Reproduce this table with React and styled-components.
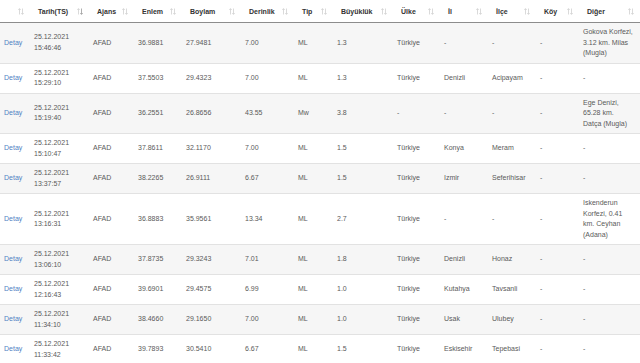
import styled, { createGlobalStyle } from 'styled-components';

const GlobalStyle = createGlobalStyle`
  body {
    margin: 0;
    background: #fff;
    font-family: 'Liberation Sans', Arial, sans-serif;
  }
`;

const columns = [
  { label: '', width: 30 },
  { label: 'Tarih(TS)', width: 59, active: true },
  { label: 'Ajans', width: 45 },
  { label: 'Enlem', width: 48 },
  { label: 'Boylam', width: 59 },
  { label: 'Derinlik', width: 53 },
  { label: 'Tip', width: 39 },
  { label: 'Büyüklük', width: 60 },
  { label: 'Ülke', width: 47 },
  { label: 'İl', width: 48 },
  { label: 'İlçe', width: 48 },
  { label: 'Köy', width: 43 },
  { label: 'Diğer', width: 61 },
];

const rows = [
  ['15:46:46', '36.9881', '27.9481', '7.00', 'ML', '1.3', 'Türkiye', '-', '-', '-', 'Gokova Korfezi, 3.12 km. Milas (Mugla)'],
  ['15:29:10', '37.5503', '29.4323', '7.00', 'ML', '1.3', 'Türkiye', 'Denizli', 'Acipayam', '-', '-'],
  ['15:19:40', '36.2551', '26.8656', '43.55', 'Mw', '3.8', '-', '-', '-', '-', 'Ege Denizi, 65.28 km. Datça (Mugla)'],
  ['15:10:47', '37.8611', '32.1170', '7.00', 'ML', '1.5', 'Türkiye', 'Konya', 'Meram', '-', '-'],
  ['13:37:57', '38.2265', '26.9111', '6.67', 'ML', '1.5', 'Türkiye', 'Izmir', 'Seferihisar', '-', '-'],
  ['13:16:31', '36.8883', '35.9561', '13.34', 'ML', '2.7', 'Türkiye', '-', '-', '-', 'Iskenderun Korfezi, 0.41 km. Ceyhan (Adana)'],
  ['13:06:10', '37.8735', '29.3243', '7.01', 'ML', '1.8', 'Türkiye', 'Denizli', 'Honaz', '-', '-'],
  ['12:16:43', '39.6901', '29.4575', '6.99', 'ML', '1.0', 'Türkiye', 'Kutahya', 'Tavsanli', '-', '-'],
  ['11:34:10', '38.4660', '29.1650', '7.00', 'ML', '1.0', 'Türkiye', 'Usak', 'Ulubey', '-', '-'],
  ['11:33:42', '39.7893', '30.5410', '6.67', 'ML', '1.5', 'Türkiye', 'Eskisehir', 'Tepebasi', '-', '-'],
];

function SortIcon({ active }) {
  return (
    <SortSvg viewBox="0 0 6 7" width="6" height="7">
      <path d="M1.5 6.5V0.8M0.3 2L1.5 0.6L2.7 2" stroke="#d0d0d0" strokeWidth="0.8" fill="none" />
      <path
        d="M4.5 0.5V6.2M3.3 5L4.5 6.4L5.7 5"
        stroke={active ? '#9a9a9a' : '#d0d0d0'}
        strokeWidth="0.8"
        fill="none"
      />
    </SortSvg>
  );
}

function App() {
  return (
    <>
      <GlobalStyle />
      <Table>
        <colgroup>
          {columns.map((col, i) => (
            <col key={i} style={{ width: col.width }} />
          ))}
        </colgroup>
        <thead>
          <tr>
            {columns.map((col, i) => (
              <HeadCell key={i}>
                <HeadInner>
                  <span>{col.label}</span>
                  <SortIcon active={col.active} />
                </HeadInner>
              </HeadCell>
            ))}
          </tr>
        </thead>
        <tbody>
          {rows.map(([time, ...rest], i) => (
            <Row key={i} $striped={i % 2 === 0}>
              <Cell>
                <DetailLink href="#">Detay</DetailLink>
              </Cell>
              <Cell>
                25.12.2021 {time}
              </Cell>
              <Cell>AFAD</Cell>
              {rest.map((value, j) => (
                <Cell key={j} $wrap={j === rest.length - 1}>
                  {value}
                </Cell>
              ))}
            </Row>
          ))}
        </tbody>
      </Table>
    </>
  );
}

const Table = styled.table`
  width: 640px;
  table-layout: fixed;
  border-collapse: collapse;
  font-size: 7px;
  color: #5a5a5a;
`;

const HeadCell = styled.th`
  height: 22px;
  padding: 0 6px 0 8px;
  border-bottom: 1px solid #8c8c8c;
  font-weight: bold;
  color: #333;
  text-align: left;
  vertical-align: middle;
`;

const HeadInner = styled.div`
  display: flex;
  align-items: center;
  justify-content: space-between;
  white-space: nowrap;
`;

const SortSvg = styled.svg`
  flex-shrink: 0;
`;

const Row = styled.tr`
  background: ${props => (props.$striped ? '#f6f6f6' : '#fff')};
  border-top: 1px solid #e2e2e2;
`;

const Cell = styled.td`
  padding: 4px ${props => (props.$wrap ? '6.5px' : '4px')} 4px 4px;
  line-height: 10.5px;
  vertical-align: middle;
  overflow-wrap: normal;
`;

const DetailLink = styled.a`
  color: #4f82c3;
  text-decoration: none;
`;

export default App;
